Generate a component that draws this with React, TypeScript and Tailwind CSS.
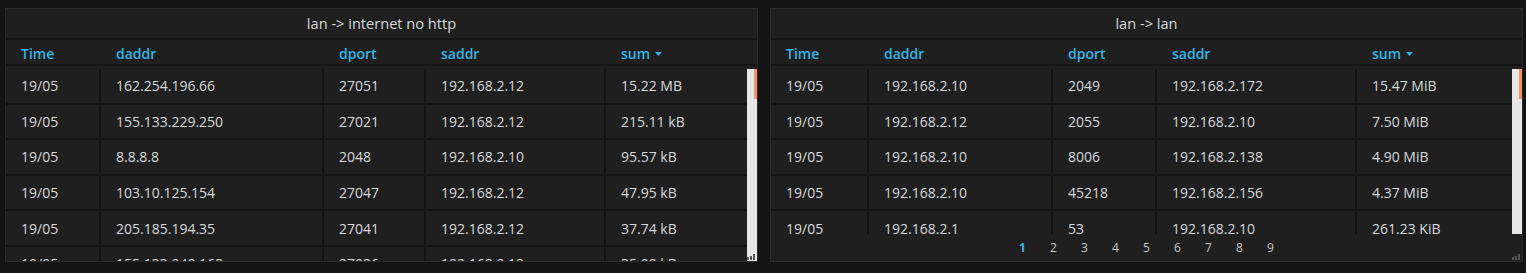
import React from "react";

type Row = string[];

interface PanelProps {
  title: string;
  widths: string[];
  rows: Row[];
  paginated?: boolean;
}

const leftRows: Row[] = [
  ["19/05", "162.254.196.66", "27051", "192.168.2.12", "15.22 MB"],
  ["19/05", "155.133.229.250", "27021", "192.168.2.12", "215.11 kB"],
  ["19/05", "8.8.8.8", "2048", "192.168.2.10", "95.57 kB"],
  ["19/05", "103.10.125.154", "27047", "192.168.2.12", "47.95 kB"],
  ["19/05", "205.185.194.35", "27041", "192.168.2.12", "37.74 kB"],
  ["19/05", "155.133.240.168", "27036", "192.168.2.12", "35.09 kB"],
];

const rightRows: Row[] = [
  ["19/05", "192.168.2.10", "2049", "192.168.2.172", "15.47 MiB"],
  ["19/05", "192.168.2.12", "2055", "192.168.2.10", "7.50 MiB"],
  ["19/05", "192.168.2.10", "8006", "192.168.2.138", "4.90 MiB"],
  ["19/05", "192.168.2.10", "45218", "192.168.2.156", "4.37 MiB"],
  ["19/05", "192.168.2.1", "53", "192.168.2.10", "261.23 KiB"],
];

const columns = ["Time", "daddr", "dport", "saddr", "sum"];

function ResizeHandle() {
  return (
    <svg width="9" height="6" viewBox="0 0 9 6" className="absolute right-[1px] bottom-[1px]">
      <rect x="0" y="3" width="2" height="3" fill="#555" />
      <rect x="3" y="2" width="2" height="4" fill="#555" />
      <rect x="6" y="0" width="2" height="6" fill="#555" />
    </svg>
  );
}

function Panel({ title, widths, rows, paginated }: PanelProps) {
  return (
    <div className="relative w-[753px] h-[254px] bg-[#1f1f20] border border-[#2a2a2b] flex flex-col">
      <div className="h-[29px] flex items-center justify-center text-[14.6px] font-medium text-[#d8d9da]">
        {title}
      </div>
      <div className="h-[2px] bg-[#141414]" />
      <div className="h-[24px] flex pt-[3px]">
        {columns.map((c, i) => (
          <div
            key={c}
            className={`${widths[i]} pl-[15px] leading-[20px] text-[14px] font-semibold text-[#33b5e5] flex items-center`}
          >
            {c}
            {c === "sum" && (
              <svg width="7" height="4" viewBox="0 0 7 4" className="ml-[5px] mt-[1px]">
                <path d="M0 0 L7 0 L3.5 4 Z" fill="#33b5e5" />
              </svg>
            )}
          </div>
        ))}
      </div>
      <div className="h-[2px] bg-[#141414]" />
      <div className="h-[3px]" />
      <div className="flex-1 flex overflow-hidden min-h-0">
        <div className="flex-1 overflow-hidden">
          {rows.map((r, ri) => (
            <div key={ri} className="flex border-b-2 border-[#141414]">
              {r.map((v, ci) => (
                <div
                  key={ci}
                  className={`${widths[ci]} ${
                    ci < r.length - 1 ? "border-r-2 border-[#141414]" : ""
                  } pl-[15px] py-[6.3px] leading-[21px] text-[14px] text-[#d8d9da] whitespace-nowrap`}
                >
                  {v}
                </div>
              ))}
            </div>
          ))}
        </div>
        <div className="w-[10px] bg-[#e6e6e6] flex justify-end">
          <div className="w-[3px] h-[30px] bg-[#f2916a]" />
        </div>
      </div>
      {paginated && (
        <div className="h-[27px] flex items-center justify-center text-[12px] text-[#c8c9ca]">
          {["1", "2", "3", "4", "5", "6", "7", "8", "9"].map((n) => (
            <span
              key={n}
              className={`w-[31px] text-center ${n === "1" ? "text-[#33b5e5] font-bold" : ""}`}
            >
              {n}
            </span>
          ))}
        </div>
      )}
      <ResizeHandle />
    </div>
  );
}

export default function App() {
  return (
    <div
      className="w-[1526px] h-[273px] bg-[#141414] pt-[8px] pl-[5px] flex gap-[12px]"
      style={{ fontFamily: '"Open Sans", "Noto Sans", sans-serif' }}
    >
      <Panel
        title="lan -> internet no http"
        widths={["w-[95px]", "w-[223px]", "w-[102px]", "w-[180px]", "flex-1"]}
        rows={leftRows}
      />
      <Panel
        title="lan -> lan"
        widths={["w-[98px]", "w-[184px]", "w-[104px]", "w-[200px]", "flex-1"]}
        rows={rightRows}
        paginated
      />
    </div>
  );
}
